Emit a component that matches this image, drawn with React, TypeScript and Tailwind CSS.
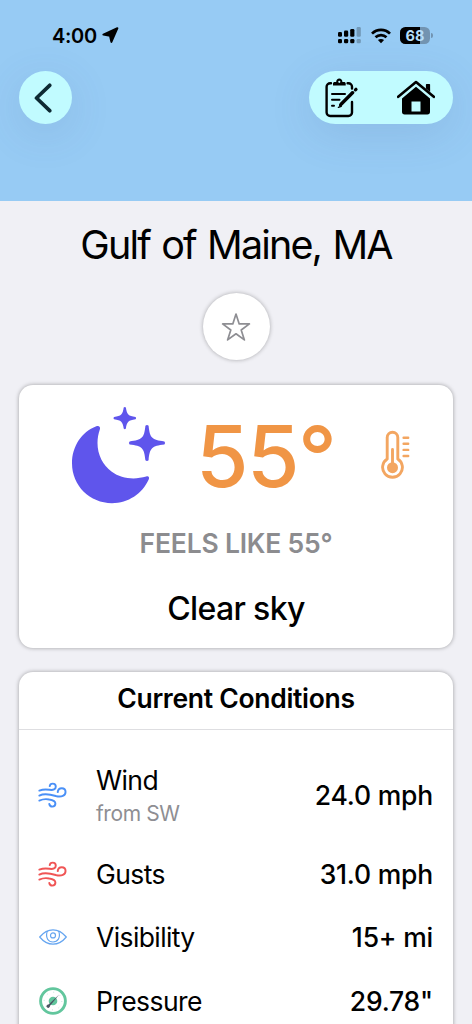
import type { ReactNode } from "react";

const LocationArrow = () => (
    <svg width="17" height="17" viewBox="0 0 17 17" className="ml-[5px]">
        <path d="M15.4 1.2 9.4 14.9 8 8.7 1.4 7.6Z" fill="#000" stroke="#000" strokeWidth="2" strokeLinejoin="round" />
    </svg>
);

const Signal = () => (
    <svg width="24" height="17" viewBox="0 0 24 17">
        <rect x="0" y="5" width="4" height="4.7" rx="1.3" />
        <rect x="6" y="3.6" width="4.2" height="6.1" rx="1.3" />
        <rect x="12.2" y="2" width="4.2" height="7.7" rx="1.3" />
        <rect x="18.6" y="0" width="4.2" height="9.7" rx="1.3" opacity="0.25" />
        <rect x="0" y="12" width="4" height="4.3" rx="1.3" />
        <rect x="6" y="12" width="4.2" height="4.3" rx="1.3" />
        <rect x="12.2" y="12" width="4.2" height="4.3" rx="1.3" />
        <rect x="18.6" y="12" width="4.2" height="4.3" rx="1.3" opacity="0.25" />
    </svg>
);

const Wifi = () => (
    <svg width="20" height="16" viewBox="0 0 20 16" fill="none" stroke="#000" strokeWidth="2.7">
        <path d="M1 5.6C6 .6 14 .6 19 5.6" />
        <path d="M4.5 9.2C7.6 6.3 12.4 6.3 15.5 9.2" />
        <path d="M10 15.2 6.9 12.1C8.7 10.6 11.3 10.6 13.1 12.1Z" fill="#000" stroke="none" />
    </svg>
);

const Battery = ({ level }: { level: number }) => (
    <div className="flex items-center">
        <div className="relative h-[17px] w-[30px] overflow-hidden rounded-[5.5px] bg-[#7294b1]">
            <div className="absolute inset-y-0 left-0 bg-black" style={{ width: `${level}%` }} />
            <span className="absolute inset-0 text-center text-[14.5px] leading-[17px] font-bold text-[#b5def9]">{level}</span>
        </div>
        <div className="ml-[1px] h-[5px] w-[2px] rounded-r-full bg-[#7294b1]" />
    </div>
);

const ClipboardIcon = () => (
    <svg width="34" height="40" viewBox="0 0 34 40" fill="none" stroke="#000" strokeWidth="2.4" strokeLinecap="round" strokeLinejoin="round">
        <path d="M6 5.2H5.2A3.6 3.6 0 0 0 1.6 8.8V34.4A3.6 3.6 0 0 0 5.2 38H23.4A3.6 3.6 0 0 0 27 34.4V24" />
        <path d="M22.6 5.2H23.4A3.6 3.6 0 0 1 27 8.8V10.5" />
        <path d="M8 7.6V5.6C8 4.6 8.7 4 9.7 4H11.2C11.2 2 12.5.6 14.3.6S17.4 2 17.4 4H19C20 4 20.7 4.6 20.7 5.6V7.6Z" fill="#000" stroke="none" />
        <circle cx="14.3" cy="3.8" r="1.1" fill="#c1fbff" stroke="none" />
        <path d="M7 16H20M7 21.7H14.5M7 27.7H9" strokeWidth="2" />
        <path d="M14.5 28.2 15.5 25 27.2 13.3" strokeWidth="1" />
        <path d="M15.6 26.8 27.8 14.6" strokeWidth="3.2" />
        <path d="M30.4 11.9 31 11.3" strokeWidth="3.2" />
        <path d="M13.4 29.3 16.2 28.4" strokeWidth="1.4" />
    </svg>
);

const HouseIcon = () => (
    <svg width="38" height="35" viewBox="0 0 38 35">
        <path d="M1.2 16.8 19 2 36.8 16.8" fill="none" stroke="#000" strokeWidth="2.6" strokeLinecap="round" strokeLinejoin="round" />
        <path d="M28.9 4.7Q28.9 4 29.6 4H32.4Q33.1 4 33.1 4.7V12L28.9 8.6Z" />
        <path fillRule="evenodd" d="M19 6.8 33 18.4V31.8Q33 34.4 30.4 34.4H7.6Q5 34.4 5 31.8V18.4ZM14.5 21.5V31.6H23.5V21.5Z" />
    </svg>
);

const StarIcon = () => (
    <svg width="30" height="30" viewBox="0 0 30 30" fill="none" stroke="#8e8e93" strokeWidth="1.7" strokeLinejoin="round">
        <path d="M15 2 18.2 11.9H28.4L20.2 18 23.4 27.9 15 21.8 6.6 27.9 9.8 18 1.6 11.9H11.8Z" />
    </svg>
);

const MoonIcon = () => (
    <svg width="94" height="97" viewBox="72 407 94 97" fill="#5f55ec">
        <path d="M96.3 426.2C81.5 432 72 446.3 72 463.3C72 486 90 503.2 112 503.2C128.3 503.2 142.3 493.6 148.7 479.5C149.8 477.2 148.4 475.7 146.2 476.6C134 480 121 478.6 111.8 471.8C102.6 465 97.5 454.5 97.5 443C97.5 438 98.3 433.8 99.9 429.2C100.7 426.7 98.8 425.2 96.3 426.2Z" />
        <path d="M123.7 407.6Q124.8 406.5 125.9 407.6C126.8 414.4 128.4 416.2 135.5 417.1Q136.6 418.2 135.5 419.3C128.4 420.2 126.8 422 125.9 428.6Q124.8 429.7 123.7 428.6C122.8 422 121.2 420.2 114.1 419.3Q113 418.2 114.1 417.1C121.2 416.2 122.8 414.4 123.7 407.6Z" />
        <path d="M145.4 425.8Q147 424.4 148.6 425.8C149.8 438 151.8 440 164.4 441.4Q165.8 443 164.4 444.6C151.8 446 149.8 448 148.6 460.2Q147 461.6 145.4 460.2C144.2 448 142.2 446 129.6 444.6Q128.2 443 129.6 441.4C142.2 440 144.2 438 145.4 425.8Z" />
    </svg>
);

const ThermometerIcon = () => (
    <svg width="29" height="50" viewBox="0 0 29 50" fill="none" stroke="#f3a661" strokeWidth="2.9" strokeLinecap="round">
        <path d="M6.2 29V7.6A5.3 5.3 0 0 1 16.8 7.6V29A9.9 9.9 0 1 1 6.2 29Z" strokeLinejoin="round" />
        <path d="M11.5 19.5V36" />
        <circle cx="11.5" cy="37.7" r="5.5" fill="#f3a661" stroke="none" />
        <path d="M22.6 7.8H27.2M22.6 13.8H27.2M22.6 19.9H27.2M22.6 26H27.2" strokeWidth="2.4" />
    </svg>
);

const WindIcon = ({ color }: { color: string }) => (
    <svg width="30" height="26" viewBox="0 0 30 26" fill="none" stroke={color} strokeWidth="2" strokeLinecap="round">
        <path d="M1.4 8.4C5.5 6.8 8.6 7 12 7.6C15.8 8.2 18.4 7 18.4 4.4C18.4 2.4 17 1.2 15.2 1.2C13.5 1.2 12.3 2.2 12.1 3.8" />
        <path d="M1.4 13.6C7 10.8 13 12.4 18.4 14C24.4 15.6 28.5 13.6 28.5 9.9C28.5 7.5 26.8 6 24.6 6C22.2 6 20.6 7.6 20.4 10" />
        <path d="M1.4 18.8C4.8 17.2 8.6 17 11.6 17.6C15.6 18.2 18 19.3 18 21.8C18 23.7 16.6 25 14.8 25C13.1 25 12 24 11.7 22.3" />
    </svg>
);

const EyeIcon = () => (
    <svg width="28" height="16" viewBox="0 0 28 16" fill="none" stroke="#65a5f0" strokeWidth="1.2">
        <path d="M.7 8C4.8 3 9.2.8 14 .8S23.2 3 27.3 8C23.2 13 18.8 15.2 14 15.2S4.8 13 .7 8Z" strokeLinejoin="round" />
        <path d="M8.6 2C7.2 4 7.2 8 8.6 10.2C11 13.9 17 13.9 19.4 10.2C20.8 8 20.8 4 19.4 2" />
        <circle cx="14" cy="6.4" r="2.5" />
    </svg>
);

const GaugeIcon = () => (
    <svg width="28" height="28" viewBox="0 0 28 28" fill="none">
        <circle cx="14" cy="14" r="12.4" stroke="#62c69d" strokeWidth="2.9" />
        <circle cx="14" cy="14" r="8.8" stroke="#b9dfd3" strokeWidth="0.9" strokeDasharray="1 5.9" />
        <circle cx="14" cy="14" r="4.3" fill="#62c69d" />
        <path d="M7.5 19.4 20.2 7.6 9.3 21Z" fill="#4b5563" />
        <circle cx="9.2" cy="19.1" r="1.7" fill="#4b5563" />
    </svg>
);

const Row = ({ icon, label, value, note }: { icon: ReactNode; label: string; value: string; note?: string }) => (
    <div className={`flex items-center pr-[20px] pl-[19px] ${note ? "h-[94px]" : "h-[63.6px]"}`}>
        <div className="flex w-[29px] shrink-0 justify-center">{icon}</div>
        <div className="ml-[29px] flex-1">
            <p className={`text-[26.5px] leading-[34px] tracking-[-0.6px] ${note ? "mt-[3px]" : ""}`}>{label}</p>
            {note && <p className="text-[21px] leading-[34px] tracking-[-0.4px] text-[#8e8e93]">{note}</p>}
        </div>
        <p className="text-[26.5px] leading-[34px] font-medium tracking-[-0.2px]">{value}</p>
    </div>
);

const conditions = [
    { label: "Wind", value: "24.0 mph", note: "from SW", icon: <WindIcon color="#4a90f7" /> },
    { label: "Gusts", value: "31.0 mph", icon: <WindIcon color="#f05555" /> },
    { label: "Visibility", value: "15+ mi", icon: <EyeIcon /> },
    { label: "Pressure", value: '29.78"', icon: <GaugeIcon /> },
];

const App = () => (
    <main className="h-[1024px] w-[472px] overflow-hidden bg-[#f0f0f5] font-['Inter',sans-serif] text-black">
        <header className="h-[201px] overflow-hidden bg-[#97cbf4]">
            {/* Status bar */}
            <div className="flex h-[71px] items-center justify-between pr-[39px] pl-[52px]">
                <div className="flex items-center">
                    <span className="text-[20px] leading-[24px] font-semibold tracking-[-0.3px]">4:00</span>
                    <LocationArrow />
                </div>
                <div className="flex items-center gap-[9px]">
                    <Signal />
                    <Wifi />
                    <Battery level={68} />
                </div>
            </div>
            <nav className="flex justify-between px-[19px]">
                <button className="flex size-[53px] items-center justify-center rounded-full bg-[#c1fbff] shadow-[0_10px_44px_rgba(70,90,150,0.14)]">
                    <svg width="18" height="30" viewBox="0 0 18 30" className="mr-[5px]">
                        <path d="M15.7 2.3 2.5 15 15.7 27.7" fill="none" stroke="#0d2a33" strokeWidth="3.7" strokeLinecap="round" strokeLinejoin="round" />
                    </svg>
                </button>
                <div className="flex h-[53px] w-[144px] items-center justify-between rounded-full bg-[#c1fbff] pr-[18px] pl-[16px] shadow-[0_10px_44px_rgba(70,90,150,0.14)]">
                    <ClipboardIcon />
                    <HouseIcon />
                </div>
            </nav>
        </header>

        <h1 className="mt-[19px] text-center text-[39.5px] leading-[50px] tracking-[-1.85px] [word-spacing:2px]">Gulf of Maine, MA</h1>
        <button className="mx-auto mt-[23px] flex size-[67px] items-center justify-center rounded-full bg-white shadow-[0_0_4px_rgba(0,0,0,0.3)]">
            <StarIcon />
        </button>

        <section className="mx-[19px] mt-[25px] h-[263px] rounded-[14px] bg-white shadow-[0_0_4px_rgba(0,0,0,0.35)]">
            <div className="flex h-[140px] items-center pl-[53px]">
                <MoonIcon />
                <span className="mt-[3px] ml-[30px] w-[140px] text-[85px] leading-[100px] font-medium tracking-[-1.5px] text-[#f09545]">55°</span>
                <div className="ml-[45px]">
                    <ThermometerIcon />
                </div>
            </div>
            <p className="mt-[1px] text-center text-[26.5px] leading-[34px] font-semibold tracking-[-0.2px] text-[#8c8c8f]">FEELS LIKE 55°</p>
            <p className="mt-[29px] text-center text-[32px] leading-[40px] font-medium tracking-[-0.65px]">Clear sky</p>
        </section>

        <section className="mx-[19px] mt-[24px] h-[420px] rounded-[14px] bg-white shadow-[0_0_4px_rgba(0,0,0,0.35)]">
            <h2 className="h-[58px] border-b border-[#dedee1] text-center text-[26.5px] leading-[53px] font-semibold tracking-[-0.3px]">Current Conditions</h2>
            <div className="pt-[18px]">
                {conditions.map((c) => (
                    <Row key={c.label} {...c} />
                ))}
            </div>
        </section>
    </main>
);

export default App;
